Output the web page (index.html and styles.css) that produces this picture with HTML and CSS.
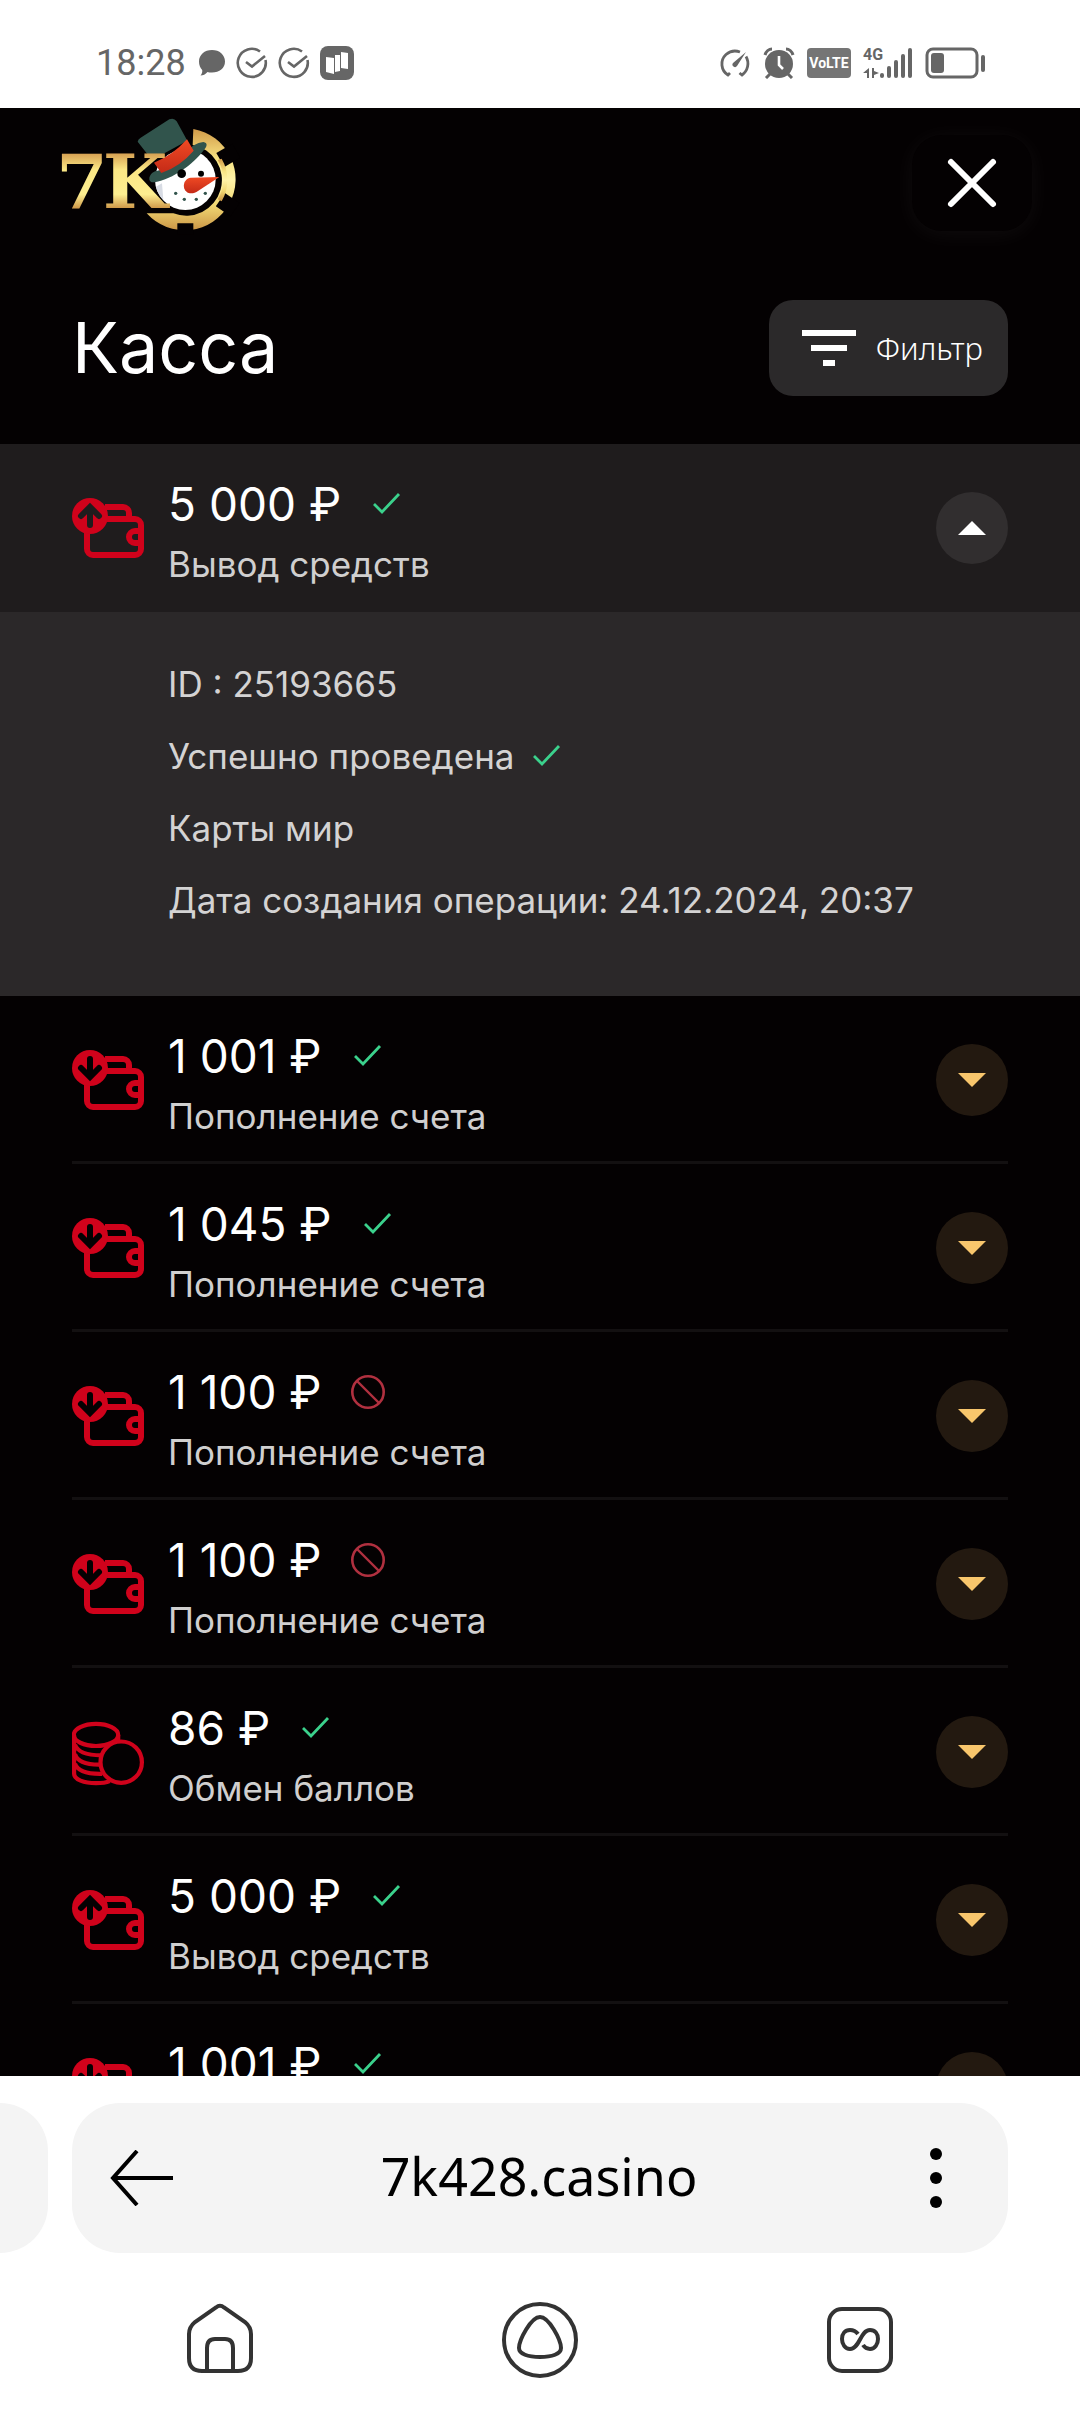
FILE: index.html
```
<!DOCTYPE html>
<html lang="ru">
<head>
  <meta charset="UTF-8" />
  <meta name="viewport" content="width=device-width, initial-scale=1.0" />
  <title>Касса</title>
  <link rel="stylesheet" href="styles.css">
</head>
<body>
  <!-- Иконки -->
  <svg class="sprite" aria-hidden="true">
    <symbol id="wallet" viewBox="0 0 24 24">
      <path d="M11 5h6a2 2 0 0 1 2 2v2M5 13v6a2 2 0 0 0 2 2h14a2 2 0 0 0 2-2v-8a2 2 0 0 0-2-2H10M23 13h-2a2 2 0 0 0 0 4h2" fill="none" stroke="#d0021b" stroke-width="2"/>
      <circle cx="6" cy="8" r="6" fill="#d0021b"/>
    </symbol>
    <symbol id="wallet-out" viewBox="0 0 24 24">
      <use href="#wallet"/>
      <path d="M3 8l3-3 3 3M6 5.500v5.500" fill="none" stroke="currentColor" stroke-width="2" stroke-linecap="round"/>
    </symbol>
    <symbol id="wallet-in" viewBox="0 0 24 24">
      <use href="#wallet"/>
      <path d="M3 8l3 3 3-3M6 5v5.500" fill="none" stroke="currentColor" stroke-width="2" stroke-linecap="round"/>
    </symbol>
    <symbol id="coins" viewBox="0 0 24 24">
      <g fill="none" stroke="#d0021b" stroke-width="1.400">
        <ellipse cx="8" cy="6.300" rx="7.400" ry="3.700"/>
        <path d="M.7 6.300v12.900c0 2 3.300 3.200 7.300 3.200 1.800 0 3.400-.2 4.600-.7M15.400 6.300v2.100M1 9.500c.8 2.600 4 3.600 8.800 3.600M1 12.700c.8 2.600 3.800 3.500 8 3.500M1 15.900c.8 2.500 4.200 3.500 9 3.400"/>
        <circle cx="16.400" cy="15.400" r="6.900"/>
      </g>
    </symbol>
    <symbol id="ok" viewBox="0 0 36 36">
      <path d="M5 18l8 8 17-18" fill="none" stroke="#3bd18c" stroke-width="2.800"/>
    </symbol>
    <symbol id="denied" viewBox="0 0 36 36">
      <path d="M7 7l22 22" stroke="#b0303f" stroke-width="2.400"/>
      <circle cx="18" cy="18" r="15.700" fill="none" stroke="#b0303f" stroke-width="2.600"/>
    </symbol>
    <symbol id="caret" viewBox="0 0 28 16">
      <path d="M0 1h28L14 15z" fill="currentColor"/>
    </symbol>
    <symbol id="round-check" viewBox="0 0 32 32">
      <path d="M24 4.500a14 14 0 1 0 5.500 8.500M10 15l6 4.500L29 9" fill="none" stroke="#666" stroke-width="2.600"/>
    </symbol>
  </svg>

  <div class="status">
    <span class="time">18:28</span>
    <svg width="28" height="28" viewBox="0 0 28 28"><path d="M14 1c7.500 0 13 4.800 13 11.500S21.500 23.500 14 23.500c-2 0-3.500-.2-4.500-.6-2 2.300-4.500 3.600-7 3.600 1.500-1.700 2-3.600 1.700-5.500C2.200 19 1 16 1 12.500 1 5.800 6.500 1 14 1z" fill="#666"/></svg>
    <svg width="32" height="32"><use href="#round-check"/></svg>
    <svg width="32" height="32"><use href="#round-check"/></svg>
    <svg width="34" height="34" viewBox="0 0 34 34"><rect width="34" height="34" rx="8" fill="#666"/><path d="M6 11l8 1v16l-8-2zM15 9h5v16l-5 1zM21 6l7 1v16l-7-1z" fill="#fff"/><path d="M14.500 10v16M20.500 7v16" stroke="#666"/></svg>
    <div class="status-right">
      <svg width="32" height="32" viewBox="0 0 32 32"><path d="M11 26l-2 2a13 13 0 0 1-2-20.500A14 14 0 0 1 21 5M27 9.500A14 14 0 0 1 23 28l-2.500-2" fill="none" stroke="#666" stroke-width="2.800"/><path d="M27 5L18 19a2.500 2.500 0 0 1-4-3z" fill="#666"/></svg>
      <svg width="32" height="32" viewBox="0 0 32 32"><circle cx="16" cy="17" r="14" fill="#666"/><path d="M2 8c1-3.500 4-6 7-6M30 8c-1-3.500-4-6-7-6M7 27l-4 4M25 27l4 4" stroke="#666" stroke-width="3" fill="none"/><path d="M16 9v9l4 4" fill="none" stroke="#fff" stroke-width="2.600"/></svg>
      <span class="volte">VoLTE</span>
      <div class="signal">
        <span>4G</span>
        <svg width="50" height="32" viewBox="0 0 50 32"><g fill="#666"><rect x="17" y="26" width="4" height="5" rx="2"/><rect x="24" y="19" width="4" height="12" rx="2"/><rect x="31" y="13" width="4" height="18" rx="2"/><rect x="38" y="7" width="4" height="24" rx="2"/><rect x="45" y="1" width="4" height="30" rx="2"/></g><path d="M0 26l6-5v10H4v-5zM9 21h2v3l5 2-5 2v3H9z" fill="#666"/></svg>
      </div>
      <svg width="62" height="32" viewBox="0 0 62 32"><rect x="2" y="2" width="50" height="28" rx="6" fill="none" stroke="#666" stroke-width="3"/><rect x="6" y="6" width="13" height="20" rx="3" fill="#666"/><rect x="56" y="8" width="4" height="17" rx="2" fill="#666"/></svg>
    </div>
  </div>

  <main class="page">
    <header class="header">
      <a href="#" aria-label="7K">
        <svg width="190" height="146" viewBox="30 0 570 438">
          <defs>
            <linearGradient id="gold" x1="0" y1="0" x2="0" y2="1">
              <stop offset="0" stop-color="#d19a48"/>
              <stop offset=".3" stop-color="#f8e483"/>
              <stop offset=".5" stop-color="#fff3a8"/>
              <stop offset=".75" stop-color="#f1d873"/>
              <stop offset="1" stop-color="#cb9646"/>
            </linearGradient>
            <linearGradient id="goldText" gradientUnits="userSpaceOnUse" x1="0" y1="130" x2="0" y2="294">
              <stop offset="0" stop-color="#d6a052"/>
              <stop offset=".3" stop-color="#fbe785"/>
              <stop offset=".75" stop-color="#fdee90"/>
              <stop offset="1" stop-color="#cf994a"/>
            </linearGradient>
            <linearGradient id="red" x1="0" y1="0" x2="0" y2="1">
              <stop offset="0" stop-color="#f04a24"/>
              <stop offset="1" stop-color="#c42a17"/>
            </linearGradient>
          </defs>
          <path d="M460 57A153 153 0 1 1 320 310H400A107 107 0 1 0 458 105z" fill="url(#gold)"/>
          <path d="M541 150l48-28M541 269l44 30M436 340v34" stroke="#040102" stroke-width="48"/>
          <circle cx="438" cy="210" r="101" fill="#040102"/>
          <path d="M533 150A112 112 0 0 1 533 268L545 274A128 128 0 0 0 545 146z" fill="url(#gold)"/>
          <circle cx="436" cy="209" r="91" fill="#fff"/>
          <path d="M348 230a91 91 0 0 0 22 40l-4-50z" fill="#d8dce4"/>
          <path d="M293 95Q294 87 302 83L388 28Q402 22 410 34L442 92 336 150z" fill="#31544c"/>
          <path d="M328 203C340 170 370 190 400 165S450 100 490 96C506 98 500 112 490 122 460 162 400 206 344 217Q326 218 328 203z" fill="#31544c"/>
          <path d="M342 158Q398 136 441 88L461 122Q420 170 364 189z" fill="url(#red)"/>
          <circle cx="425" cy="191" r="13"/>
          <circle cx="483" cy="191" r="9"/>
          <path d="M538 201L452 203C428 206 424 240 446 249 456 252 466 248 474 243z" fill="url(#red)"/>
          <g fill="#31544c"><circle cx="407" cy="250" r="5"/><circle cx="433" cy="268" r="5"/><circle cx="469" cy="268" r="5"/><circle cx="496" cy="250" r="5"/></g>
          <text class="logo-text" x="48" y="293" fill="url(#goldText)">7</text>
          <text class="logo-text" x="188" y="293" fill="url(#goldText)">K</text>
        </svg>
      </a>
      <button class="close" aria-label="Закрыть">
        <svg width="54" height="54" viewBox="0 0 54 54"><path d="M6 6l42 42M48 6L6 48" stroke="#fff" stroke-width="6" stroke-linecap="round"/></svg>
      </button>
    </header>

    <div class="title">
      <h1>Касса</h1>
      <button class="filter">
        <svg width="54" height="36" viewBox="0 0 54 36"><path d="M0 0h54v6H0zM9 15h36v6H9zM21 30h12v6H21z" fill="#fff"/></svg>
        Фильтр
      </button>
    </div>

    <div class="operation open">
      <svg class="type"><use href="#wallet-out"/></svg>
      <div class="info">
        <p class="amount">5 000 ₽ <svg class="mark"><use href="#ok"/></svg></p>
        <p class="kind">Вывод средств</p>
      </div>
      <button class="toggle up" aria-label="Свернуть" aria-expanded="true"><svg><use href="#caret"/></svg></button>
    </div>
    <div class="details">
      <p>ID : 25193665</p>
      <p>Успешно проведена <svg class="mark"><use href="#ok"/></svg></p>
      <p>Карты мир</p>
      <p>Дата создания операции: 24.12.2024, 20:37</p>
    </div>

    <div class="operation">
      <svg class="type"><use href="#wallet-in"/></svg>
      <div class="info">
        <p class="amount">1 001 ₽ <svg class="mark"><use href="#ok"/></svg></p>
        <p class="kind">Пополнение счета</p>
      </div>
      <button class="toggle" aria-label="Развернуть" aria-expanded="false"><svg><use href="#caret"/></svg></button>
    </div>
    <div class="operation">
      <svg class="type"><use href="#wallet-in"/></svg>
      <div class="info">
        <p class="amount">1 045 ₽ <svg class="mark"><use href="#ok"/></svg></p>
        <p class="kind">Пополнение счета</p>
      </div>
      <button class="toggle" aria-label="Развернуть" aria-expanded="false"><svg><use href="#caret"/></svg></button>
    </div>
    <div class="operation">
      <svg class="type"><use href="#wallet-in"/></svg>
      <div class="info">
        <p class="amount">1 100 ₽ <svg class="mark"><use href="#denied"/></svg></p>
        <p class="kind">Пополнение счета</p>
      </div>
      <button class="toggle" aria-label="Развернуть" aria-expanded="false"><svg><use href="#caret"/></svg></button>
    </div>
    <div class="operation">
      <svg class="type"><use href="#wallet-in"/></svg>
      <div class="info">
        <p class="amount">1 100 ₽ <svg class="mark"><use href="#denied"/></svg></p>
        <p class="kind">Пополнение счета</p>
      </div>
      <button class="toggle" aria-label="Развернуть" aria-expanded="false"><svg><use href="#caret"/></svg></button>
    </div>
    <div class="operation">
      <svg class="type"><use href="#coins"/></svg>
      <div class="info">
        <p class="amount">86 ₽ <svg class="mark"><use href="#ok"/></svg></p>
        <p class="kind">Обмен баллов</p>
      </div>
      <button class="toggle" aria-label="Развернуть" aria-expanded="false"><svg><use href="#caret"/></svg></button>
    </div>
    <div class="operation">
      <svg class="type"><use href="#wallet-out"/></svg>
      <div class="info">
        <p class="amount">5 000 ₽ <svg class="mark"><use href="#ok"/></svg></p>
        <p class="kind">Вывод средств</p>
      </div>
      <button class="toggle" aria-label="Развернуть" aria-expanded="false"><svg><use href="#caret"/></svg></button>
    </div>
    <div class="operation">
      <svg class="type"><use href="#wallet-in"/></svg>
      <div class="info">
        <p class="amount">1 001 ₽ <svg class="mark"><use href="#ok"/></svg></p>
        <p class="kind">Пополнение счета</p>
      </div>
      <button class="toggle" aria-label="Развернуть" aria-expanded="false"><svg><use href="#caret"/></svg></button>
    </div>
  </main>

  <footer class="browser">
    <div class="tabs">
      <div class="tab-prev"></div>
      <div class="address">
        <button aria-label="Назад"><svg width="64" height="56" viewBox="0 0 64 56"><path d="M27 1L3 28l24 27M3 28h60" fill="none" stroke="#000" stroke-width="4"/></svg></button>
        <span class="url">7k428.casino</span>
        <button aria-label="Меню"><svg width="64" height="60" viewBox="0 0 64 60"><circle cx="32" cy="6" r="6"/><circle cx="32" cy="30" r="6"/><circle cx="32" cy="54" r="6"/></svg></button>
      </div>
    </div>
    <nav class="nav">
      <button aria-label="Домой"><svg width="84" height="84" viewBox="0 0 84 84"><path d="M38 9.500Q42 6 46 9.500L67 24Q73 29 73 36V60Q73 73 60 73H24Q11 73 11 60V36Q11 29 17 24zM29 73V50Q29 41 37 41H47Q55 41 55 50V73"/></svg></button>
      <button aria-label="Алиса"><svg width="84" height="84" viewBox="0 0 84 84"><circle cx="42" cy="42" r="36"/><path d="M42 19C33 19 21 42 21 50 21 56 30 59 42 59S63 56 63 50C63 42 51 19 42 19z"/></svg></button>
      <button aria-label="Вкладки"><svg width="84" height="84" viewBox="0 0 84 84"><rect x="11" y="11" width="62" height="62" rx="13"/><path d="M40 36C37 32 34 32 32 32 27 32 24 36 24 41S27 51 32 51C42 51 42 32 52 32 57 32 60 36 60 41S57 51 52 51C50 51 47 50 45 47"/></svg></button>
    </nav>
  </footer>
</body>
</html>
```
FILE: styles.css
```
* {
  box-sizing: border-box;
}
body {
  margin: 0;
  height: 100vh;
  display: flex;
  flex-direction: column;
  background: #fff;
  font-family: Inter, sans-serif;
}
p, h1 {
  margin: 0;
}
button {
  border: none;
  padding: 0;
  background: none;
  cursor: pointer;
}
svg {
  display: block;
  flex-shrink: 0;
}
.sprite {
  position: absolute;
  width: 0;
  height: 0;
}

/* status bar */
.status {
  display: flex;
  align-items: center;
  gap: 10px;
  height: 108px;
  padding: 18px 93px 0 96px;
  color: #666;
  flex-shrink: 0;
}
.time {
  font-family: Roboto, sans-serif;
  font-size: 36px;
  margin-right: 2px;
}
.status-right {
  display: flex;
  align-items: center;
  gap: 12px;
  margin-left: auto;
}
.volte {
  width: 44px;
  line-height: 30px;
  border-radius: 4px;
  background: #757575;
  color: #fff;
  font-family: Roboto, sans-serif;
  font-size: 14px;
  font-weight: bold;
  text-align: center;
}
.signal {
  display: grid;
}
.signal > * {
  grid-area: 1 / 1;
}
.signal span {
  font-family: Roboto, sans-serif;
  font-size: 16px;
  font-weight: bold;
  line-height: 16px;
}

/* cashier page */
.page {
  flex: 1;
  min-height: 0;
  overflow: hidden;
  background: #040102;
  color: #fff;
}
.header {
  display: flex;
  align-items: center;
  justify-content: space-between;
  height: 150px;
  padding: 0 48px 0 50px;
}
.logo-text {
  font-family: "DejaVu Serif", serif;
  font-size: 224px;
  font-weight: bold;
}
.close {
  display: flex;
  align-items: center;
  justify-content: center;
  width: 120px;
  height: 96px;
  border-radius: 30px;
  background: #040102;
  box-shadow: 0 3px 24px rgba(255, 255, 255, 0.05);
}
.title {
  display: flex;
  align-items: center;
  justify-content: space-between;
  padding: 42px 72px 48px;
}
h1 {
  font-size: 70px;
  font-weight: 400;
  line-height: 96px;
}
.filter {
  display: flex;
  align-items: center;
  gap: 20px;
  height: 96px;
  padding: 0 25px 0 33px;
  border-radius: 24px;
  background: #2b292a;
  color: #fff;
  font-family: "Noto Sans", sans-serif;
  font-size: 31px;
  font-weight: 300;
}
.operation {
  display: flex;
  align-items: center;
  gap: 24px;
  height: 168px;
  margin: 0 72px;
  padding-top: 3px;
  border-bottom: 3px solid #131011;
}
.operation.open {
  margin: 0;
  padding: 0 72px;
  border: none;
  background: #1f1c1d;
}
.type {
  width: 72px;
  height: 72px;
  color: #040102;
}
.open .type {
  color: #1f1c1d;
}
.info {
  flex: 1;
  padding-top: 12px;
}
.amount {
  display: flex;
  align-items: center;
  gap: 28px;
  font-size: 46px;
  line-height: 60px;
}
.kind {
  color: #d0cfcf;
  font-size: 35px;
  line-height: 60px;
}
.mark {
  width: 36px;
  height: 36px;
}
.toggle {
  display: flex;
  align-items: center;
  justify-content: center;
  width: 72px;
  height: 72px;
  border-radius: 50%;
  background: #231910;
  color: #f8c66c;
}
.toggle svg {
  width: 28px;
  height: 16px;
}
.toggle.up {
  background: #312e2f;
  color: #fff;
}
.toggle.up svg {
  transform: rotate(180deg);
}
.details {
  padding: 36px 72px 60px 168px;
  background: #2b2829;
  color: #d4d3d3;
  font-size: 35px;
  line-height: 72px;
}
.details p {
  display: flex;
  align-items: center;
  gap: 14px;
}

/* browser panel */
.browser {
  flex-shrink: 0;
  padding-top: 27px;
}
.tabs {
  display: flex;
  gap: 24px;
  height: 150px;
  padding-right: 72px;
}
.tab-prev {
  width: 48px;
  border-radius: 0 48px 48px 0;
  background: #f4f4f4;
}
.address {
  flex: 1;
  display: flex;
  align-items: center;
  justify-content: space-between;
  padding: 0 40px 0 38px;
  border-radius: 48px;
  background: #f4f4f4;
}
.url {
  padding-bottom: 6px;
  font-family: "Noto Sans", sans-serif;
  font-size: 52px;
}
.nav {
  display: grid;
  grid-template-columns: repeat(3, 1fr);
  justify-items: center;
  padding: 45px 60px 30px;
}
.nav svg {
  fill: none;
  stroke: #333;
  stroke-width: 4;
}
```
